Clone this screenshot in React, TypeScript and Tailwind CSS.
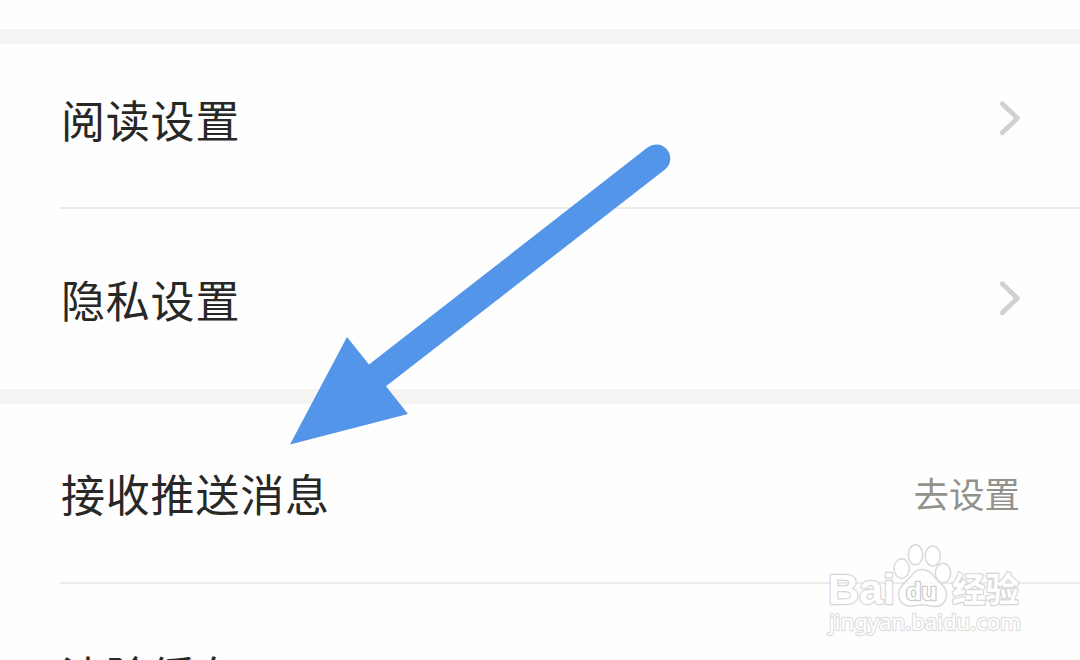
import React from "react";

function Chevron() {
  return (
    <svg className="block h-[36px] w-[22px]" viewBox="0 0 22 36" fill="none" stroke="#d1d1cf" strokeWidth="4.8" strokeLinecap="round" strokeLinejoin="round">
      <path d="M4.300 2.700 19.400 17.200 4.300 31.800" />
    </svg>
  );
}

function Row({ label, className, children }: { label: string; className: string; children?: React.ReactNode }) {
  return (
    <div className={`flex shrink-0 items-center justify-between pl-[61px] pr-[60px] ${className}`}>
      <span className="whitespace-nowrap text-[44px] leading-[60px] tracking-[0.8px] text-[#282826]">{label}</span>
      {children}
    </div>
  );
}

function Watermark() {
  return (
    <svg className="absolute left-[820px] top-[536px] h-[110px] w-[215px]" viewBox="820 536 215 110">
      <g fill="#ffffff" fillOpacity="0.7" stroke="#d9d9d9" strokeWidth="1.5" strokeLinejoin="round">
        <ellipse cx="901.7" cy="568.5" rx="7.7" ry="9.7" />
        <ellipse cx="915.5" cy="554.8" rx="7.2" ry="10" />
        <ellipse cx="932.8" cy="556" rx="7.6" ry="10" />
        <ellipse cx="943" cy="573" rx="7.7" ry="9.7" />
        <path d="M922 569.500c-6 0-9 4-12 8-4 5-11 8-11.500 16-.4 8 6 13 13 12.500 4-.3 7-1.200 11-1.200 5 0 8 1.700 12.500 1.700 7 0 11.500-5 11.500-12 0-8-7-11-11.500-17-3-4-7-8-13-8Z" />
      </g>
      <g fill="#ffffff" stroke="#d6d6d6" strokeWidth="2.4" paintOrder="stroke" strokeLinejoin="round" fontFamily='"Liberation Sans", "Noto Sans CJK SC", sans-serif' fontWeight="bold">
        <text x="828" y="604" fontSize="43" textLength="67" lengthAdjust="spacingAndGlyphs">Bai</text>
        <text x="906" y="600" fontSize="23" textLength="31" lengthAdjust="spacingAndGlyphs" stroke="#cccccc">du</text>
        <text x="952" y="601.500" fontSize="34" textLength="67" lengthAdjust="spacingAndGlyphs">经验</text>
      </g>
      <text x="829" y="630" fontSize="22" textLength="192" lengthAdjust="spacingAndGlyphs" fill="#ffffff" stroke="#dedede" strokeWidth="2.400" paintOrder="stroke" strokeLinejoin="round" fontFamily='"Noto Sans", sans-serif'>
        jingyan.baidu.com
      </text>
    </svg>
  );
}

export default function App() {
  return (
    <main lang="zh-CN" className="relative flex h-[660px] w-[1080px] flex-col overflow-hidden bg-[#fefefe] font-['Noto_Sans_CJK_SC',sans-serif]">
      <div className="h-[29px] shrink-0" />
      <div className="h-[15px] shrink-0 bg-[#f5f4f2]" />
      <Row label="阅读设置" className="h-[163px] pb-[13px]"><Chevron /></Row>
      <div className="ml-[60px] h-[2px] shrink-0 bg-[#ebebe9]" />
      <Row label="隐私设置" className="h-[180px]"><Chevron /></Row>
      <div className="h-[15px] shrink-0 bg-[#f5f4f2]" />
      <Row label="接收推送消息" className="h-[178px]">
        <span className="text-[35.5px] leading-[50px] text-[#92928d]">去设置</span>
      </Row>
      <div className="ml-[60px] h-[2px] shrink-0 bg-[#ebebe9]" />
      <Row label="清除缓存" className="h-[180px] pt-[2px]" />
      <svg className="absolute left-[280px] top-[135px] h-[320px] w-[400px]" viewBox="280 135 400 320">
        <path d="M290 444.500 347 337 369 364.500 647.500 147.500A14 14 0 0 1 665 169.500L386 386.300 408 414Z" fill="#5295e9" />
      </svg>
      <Watermark />
    </main>
  );
}
